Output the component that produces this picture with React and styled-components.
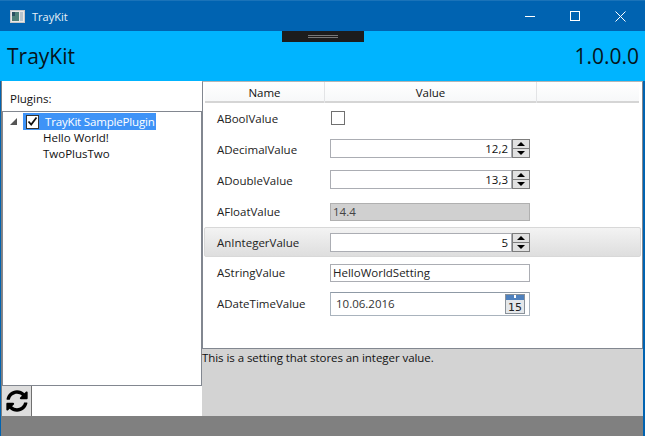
import React from 'react';
import styled, { createGlobalStyle } from 'styled-components';
import { FaSyncAlt } from 'react-icons/fa';

const GlobalStyle = createGlobalStyle`
  html, body {
    margin: 0;
    padding: 0;
    width: 645px;
    height: 436px;
    overflow: hidden;
    font-family: "Open Sans", "Noto Sans", sans-serif;
    font-size: 12px;
    color: #111;
  }
`;

const Window = styled.div`
  width: 645px;
  height: 436px;
  box-sizing: border-box;
  display: flex;
  flex-direction: column;
  background: #808080;
  border-left: 1px solid #0063b1;
  border-right: 2px solid #0063b1;
  position: relative;
`;

const TitleBar = styled.div`
  height: 31px;
  flex: none;
  margin: 0 -2px 0 -1px;
  padding: 0 2px 0 10px;
  background: #0063b1;
  border-top: 1px solid #1a73b9;
  box-sizing: border-box;
  color: #fff;
  display: flex;
  align-items: center;
  gap: 7px;
`;

const TitleText = styled.span`
  flex: 1;
  font-size: 11px;
  color: #e8f1f8;
`;

const CaptionGroup = styled.div`
  display: flex;
`;

const Caption = styled.button`
  width: 45px;
  height: 30px;
  border: 0;
  padding: 0;
  background: transparent;
  display: flex;
  align-items: center;
  justify-content: center;
`;

const Header = styled.div`
  height: 50px;
  flex: none;
  margin-left: -1px;
  margin-right: -2px;
  padding: 0 6px 0 7px;
  background: #00b4ff;
  display: flex;
  align-items: center;
  justify-content: space-between;
  font-size: 21px;
  line-height: 54px;
  color: #06141b;
`;

const Grip = styled.div`
  position: absolute;
  left: 281px;
  top: 31px;
  width: 82px;
  height: 11px;
  background: #1c1c1c;
  display: flex;
  flex-direction: column;
  align-items: center;
  justify-content: center;
  gap: 1px;

  i {
    display: block;
    width: 30px;
    height: 1px;
    background: #777;
  }
`;

const Body = styled.div`
  height: 335px;
  flex: none;
  display: flex;
  padding-left: 1px;
`;

const LeftColumn = styled.div`
  width: 200px;
  flex: none;
  background: #fff;
  display: flex;
  flex-direction: column;
`;

const PluginsLabel = styled.div`
  height: 30px;
  flex: none;
  box-sizing: border-box;
  padding: 10px 0 0 8px;
  line-height: 16px;
  font-size: 11.5px;
`;

const Tree = styled.div`
  height: 275px;
  flex: none;
  box-sizing: border-box;
  border: 1px solid #828790;
  padding: 1px 0 0 6px;
  font-size: 11.5px;
`;

const TreeRoot = styled.div`
  display: flex;
  align-items: center;
  height: 17px;
`;

const Expander = styled.span`
  width: 0;
  height: 0;
  border-style: solid;
  border-width: 0 0 7px 7px;
  border-color: transparent transparent #555 transparent;
  margin: 0 6px 0 1px;
  flex: none;
`;

const SelectedItem = styled.div`
  width: 133px;
  height: 17px;
  background: #3e93f7;
  color: #fff;
  display: flex;
  align-items: center;
  padding-left: 3px;
  box-sizing: border-box;
  gap: 6px;
  white-space: nowrap;
  letter-spacing: -0.17px;
`;

const TreeCheck = styled.span`
  width: 13px;
  height: 14px;
  box-sizing: border-box;
  border: 1px solid #333;
  background: #fff;
  flex: none;
  display: flex;
  align-items: center;
  justify-content: center;
`;

const TreeChild = styled.div`
  height: 16px;
  line-height: 16px;
  padding-left: 34px;
  color: #111;
`;

const RefreshRow = styled.div`
  height: 30px;
  flex: none;
  display: flex;
`;

const RefreshButton = styled.button`
  width: 30px;
  height: 30px;
  flex: none;
  padding: 0;
  box-sizing: border-box;
  border: 0;
  border-right: 1px solid #707070;
  background: #dddddd;
  display: flex;
  align-items: center;
  justify-content: center;
  color: #000;
`;

const RightColumn = styled.div`
  flex: 1;
  display: flex;
  flex-direction: column;
  background: #d3d3d3;
  min-width: 0;
`;

const PropertyGrid = styled.div`
  height: 268px;
  flex: none;
  box-sizing: border-box;
  background: #fff;
  border: 1px solid #828790;
  border-top: 1px solid #b5b5b5;
  padding: 0 2px 0 2px;
`;

const GridHeader = styled.div`
  height: 21px;
  box-sizing: border-box;
  display: grid;
  grid-template-columns: 120px 212px 1fr;
  margin-right: 1px;
  background: linear-gradient(#ffffff, #f7f8f9);
  border-bottom: 2px solid #d5d5d5;
`;

const HeaderCell = styled.div`
  text-align: center;
  line-height: 21px;
  font-size: 11.5px;
  border-right: 1px solid #e3e4e6;

  &:last-child {
    border-right: 0;
  }
`;

const Row = styled.div`
  height: 31px;
  box-sizing: border-box;
  display: flex;
  align-items: center;
`;

const ActiveRow = styled(Row)`
  height: 30px;
  margin: 0 -1px;
  background: linear-gradient(#f3f3f3, #dedede);
  border: 1px solid #d8d8d8;
  border-radius: 2px;
`;

const RowLabel = styled.div`
  width: 125px;
  flex: none;
  padding-left: 12px;
  box-sizing: border-box;
  font-size: 11.5px;
  color: #222;
`;

const Check = styled.span`
  width: 14px;
  height: 14px;
  box-sizing: border-box;
  border: 1px solid #707070;
  background: #fff;
  margin: 0 0 1px 1px;
`;

const Spinner = styled.div`
  width: 200px;
  height: 19px;
  flex: none;
  display: flex;
  margin-top: ${p => (p.$active ? 0 : -2)}px;
`;

const SpinnerText = styled.div`
  flex: 1;
  box-sizing: border-box;
  border: 1px solid #abadb3;
  background: #fff;
  text-align: right;
  line-height: 17px;
  padding-right: 3px;
  font-size: 11.5px;
`;

const SpinnerButtons = styled.div`
  width: 18px;
  flex: none;
  box-sizing: border-box;
  border: 1px solid #7d7d7d;
  display: flex;
  flex-direction: column;
  background: #7d7d7d;
  gap: 1px;
`;

const SpinnerButton = styled.span`
  flex: 1;
  background: #e1e1e1;
  display: flex;
  align-items: center;
  justify-content: center;

  &::after {
    content: '';
    width: 0;
    height: 0;
    border-left: 4px solid transparent;
    border-right: 4px solid transparent;
    ${p => (p.$down ? 'border-top: 4px solid #000;' : 'border-bottom: 4px solid #000;')}
  }
`;

const TextBox = styled.div`
  width: 200px;
  height: 18px;
  flex: none;
  box-sizing: border-box;
  border: 1px solid ${p => (p.$disabled ? '#b0b0b0' : '#abadb3')};
  background: ${p => (p.$disabled ? '#d0d0d0' : '#fff')};
  color: ${p => (p.$disabled ? '#444' : '#222')};
  padding-left: 2px;
  line-height: 15px;
  font-size: 11.5px;
`;

const DateBox = styled.div`
  width: 200px;
  height: 24px;
  flex: none;
  box-sizing: border-box;
  border: 1px solid #a9b3bd;
  border-top-color: #8f9aa6;
  background: #fff;
  padding: 0 4px 0 5px;
  display: flex;
  align-items: center;
  justify-content: space-between;
  font-size: 11.5px;
  color: #333;
`;

const Description = styled.div`
  padding-top: 1px;
  line-height: 16px;
  font-size: 11.5px;
  letter-spacing: -0.06px;
  color: #111;
`;

const Calendar = () => (
  <svg width="20" height="20" viewBox="0 0 20 20">
    <rect x="0.5" y="0.5" width="19" height="19" fill="#e4e7ea" stroke="#8a929a" />
    <rect x="1" y="1" width="18" height="5" fill="#4f81bd" />
    <rect x="9" y="1" width="2" height="3" fill="#fff" />
    <text x="10" y="17" fontSize="11" textAnchor="middle" fontFamily="DejaVu Sans" fill="#222">15</text>
  </svg>
);

const settingsRows = [
  { name: 'ABoolValue', kind: 'bool' },
  { name: 'ADecimalValue', kind: 'spin', value: '12,2' },
  { name: 'ADoubleValue', kind: 'spin', value: '13,3' },
  { name: 'AFloatValue', kind: 'disabled', value: '14.4' },
  { name: 'AnIntegerValue', kind: 'spin', value: '5', active: true },
  { name: 'AStringValue', kind: 'text', value: 'HelloWorldSetting' },
  { name: 'ADateTimeValue', kind: 'date', value: '10.06.2016' },
];

const renderEditor = (row) => {
  if (row.kind === 'bool') return <Check />;
  if (row.kind === 'spin') {
    return (
      <Spinner $active={row.active}>
        <SpinnerText>{row.value}</SpinnerText>
        <SpinnerButtons>
          <SpinnerButton />
          <SpinnerButton $down />
        </SpinnerButtons>
      </Spinner>
    );
  }
  if (row.kind === 'disabled') return <TextBox $disabled>{row.value}</TextBox>;
  if (row.kind === 'text') return <TextBox>{row.value}</TextBox>;
  return (
    <DateBox>
      {row.value}
      <Calendar />
    </DateBox>
  );
};

export default function App() {
  return (
    <Window>
      <GlobalStyle />
      <TitleBar>
        <svg width="15" height="13" viewBox="0 0 15 13">
          <rect x="0.5" y="0.5" width="14" height="12" fill="#e8e8e8" stroke="#c8c8c8" />
          <rect x="2" y="2" width="7" height="9" fill="#4d7f78" />
          <rect x="2" y="2" width="3" height="4" fill="#2a4f60" />
          <rect x="10" y="2" width="3" height="9" fill="#b7c4cc" />
        </svg>
        <TitleText>TrayKit</TitleText>
        <CaptionGroup>
          <Caption>
            <svg width="11" height="11" viewBox="0 0 11 11"><path d="M0 5.5H10" stroke="#fff" fill="none" /></svg>
          </Caption>
          <Caption>
            <svg width="11" height="11" viewBox="0 0 11 11"><rect x="0.5" y="0.5" width="9" height="9" stroke="#fff" fill="none" /></svg>
          </Caption>
          <Caption>
            <svg width="11" height="11" viewBox="0 0 11 11"><path d="M0.5 0.5L10.5 10.5M10.5 0.5L0.5 10.5" stroke="#fff" fill="none" /></svg>
          </Caption>
        </CaptionGroup>
      </TitleBar>
      <Header>
        <span>TrayKit</span>
        <span>1.0.0.0</span>
      </Header>
      <Grip><i /><i /></Grip>
      <Body>
        <LeftColumn>
          <PluginsLabel>Plugins:</PluginsLabel>
          <Tree>
            <TreeRoot>
              <Expander />
              <SelectedItem>
                <TreeCheck>
                  <svg width="11" height="11" viewBox="0 0 11 11">
                    <path d="M1.5 5.5L4.2 8.5L9.5 1.5" stroke="#111" strokeWidth="1.8" fill="none" />
                  </svg>
                </TreeCheck>
                TrayKit SamplePlugin
              </SelectedItem>
            </TreeRoot>
            <TreeChild>Hello World!</TreeChild>
            <TreeChild>TwoPlusTwo</TreeChild>
          </Tree>
          <RefreshRow>
            <RefreshButton><FaSyncAlt size={22} /></RefreshButton>
          </RefreshRow>
        </LeftColumn>
        <RightColumn>
          <PropertyGrid>
            <GridHeader>
              <HeaderCell>Name</HeaderCell>
              <HeaderCell>Value</HeaderCell>
              <HeaderCell />
            </GridHeader>
            {settingsRows.map((row) => {
              const RowKind = row.active ? ActiveRow : Row;
              return (
                <RowKind key={row.name}>
                  <RowLabel>{row.name}</RowLabel>
                  {renderEditor(row)}
                </RowKind>
              );
            })}
          </PropertyGrid>
          <Description>This is a setting that stores an integer value.</Description>
        </RightColumn>
      </Body>
    </Window>
  );
}
